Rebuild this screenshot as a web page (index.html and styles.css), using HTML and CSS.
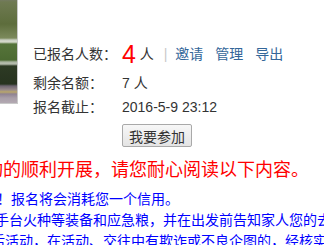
FILE: index.html
```html
<!DOCTYPE html>
<html lang="zh-CN">
  <head>
    <meta charset="utf-8">
    <title>活动报名</title>
    <link rel="stylesheet" href="styles.css">
  </head>
  <body>
    <div class="event">
      <div class="thumb"></div>
      <div class="info">
        <div class="row first">
          <span class="label">人数限制：</span>
          <span class="value">100 人</span>
        </div>
        <div class="row joined">
          <span class="label">已报名人数：</span>
          <span class="value"><em class="count">4</em> 人 <span class="sep">|</span><a href="#">邀请</a><a href="#">管理</a><a href="#">导出</a></span>
        </div>
        <div class="row">
          <span class="label">剩余名额：</span>
          <span class="value">7 人</span>
        </div>
        <div class="row">
          <span class="label">报名截止：</span>
          <span class="value">2016-5-9 23:12</span>
        </div>
        <div class="action">
          <button class="join">我要参加</button>
        </div>
      </div>
    </div>

    <div class="notice">
      <p class="warn">活动的顺利开展，请您耐心阅读以下内容。</p>
      <p class="line l1">！报名将会消耗您一个信用。</p>
      <p class="line l2">手台火种等装备和应急粮，并在出发前告知家人您的去向</p>
      <p class="line l3">后活动，在活动、交往中有欺诈或不良企图的，经核实</p>
    </div>
  </body>
</html>
```

FILE: styles.css
```css
html, body { margin: 0; padding: 0; }
body {
  width: 324px;
  height: 245px;
  overflow: hidden;
  background: #fff;
  font-family: "Liberation Sans", "Noto Sans CJK SC", sans-serif;
  font-size: 14px;
  color: #333;
}

.event {
  display: flex;
  margin-top: -23px;
}
.thumb {
  width: 17px;
  height: 126px;
  border-right: 1px solid #c9c9c9;
  border-bottom: 1px solid #c9c9c9;
  background: linear-gradient(to bottom,
    #8d8a8e 0, #7e7a7c 19px,
    #6f7a52 25px, #5d6d3c 47px, #7c8a5c 61px,
    #c9cfc2 63px, #d7dccd 65px,
    #55743a 67px, #4c6a32 83px,
    #aab4a0 85px, #b8beb0 87px,
    #2d3a24 89px, #27331f 107px,
    #6d6470 109px, #9a8c8a 113px, #b9a76a 115px, #8f8292 117px,
    #a89ea8 121px, #b3a9b2 126px);
}
.info {
  margin-left: 15px;
}
.row {
  display: flex;
  height: 24px;
  line-height: 24px;
  white-space: nowrap;
}
.row.first { margin-bottom: 36px; }
.row.joined { height: 34px; line-height: 34px; }
.label { width: 89px; }
.value { color: #333; }

.count {
  font-style: normal;
  font-size: 25px;
  color: #ff0000;
  vertical-align: top;
}
.sep {
  color: #c8c8c8;
  margin: 0 8px 0 6px;
}
.value a {
  color: #336699;
  text-decoration: none;
  margin-right: 12px;
}

.action {
  margin-top: 5px;
  padding-left: 89px;
}
.join {
  width: 70px;
  height: 23px;
  padding: 0;
  border: 1px solid #a9a9a9;
  border-radius: 2px;
  background: linear-gradient(#f7f7f7, #e4e4e4);
  font-family: "Noto Sans CJK SC", sans-serif;
  font-size: 14px;
  color: #333;
}

.notice {
  margin-top: 9px;
  white-space: nowrap;
}
.notice p { margin: 0; }
.notice .warn {
  margin: 0 0 5px -33px;
  font-size: 18px;
  line-height: 28px;
  color: #ff0000;
}
.notice .line {
  font-size: 14px;
  line-height: 21px;
  color: #0000ff;
}
.notice .l1 { margin-left: -3px; }
.notice .l2 { margin-left: -5px; }
.notice .l3 { margin-left: -9px; }
```
